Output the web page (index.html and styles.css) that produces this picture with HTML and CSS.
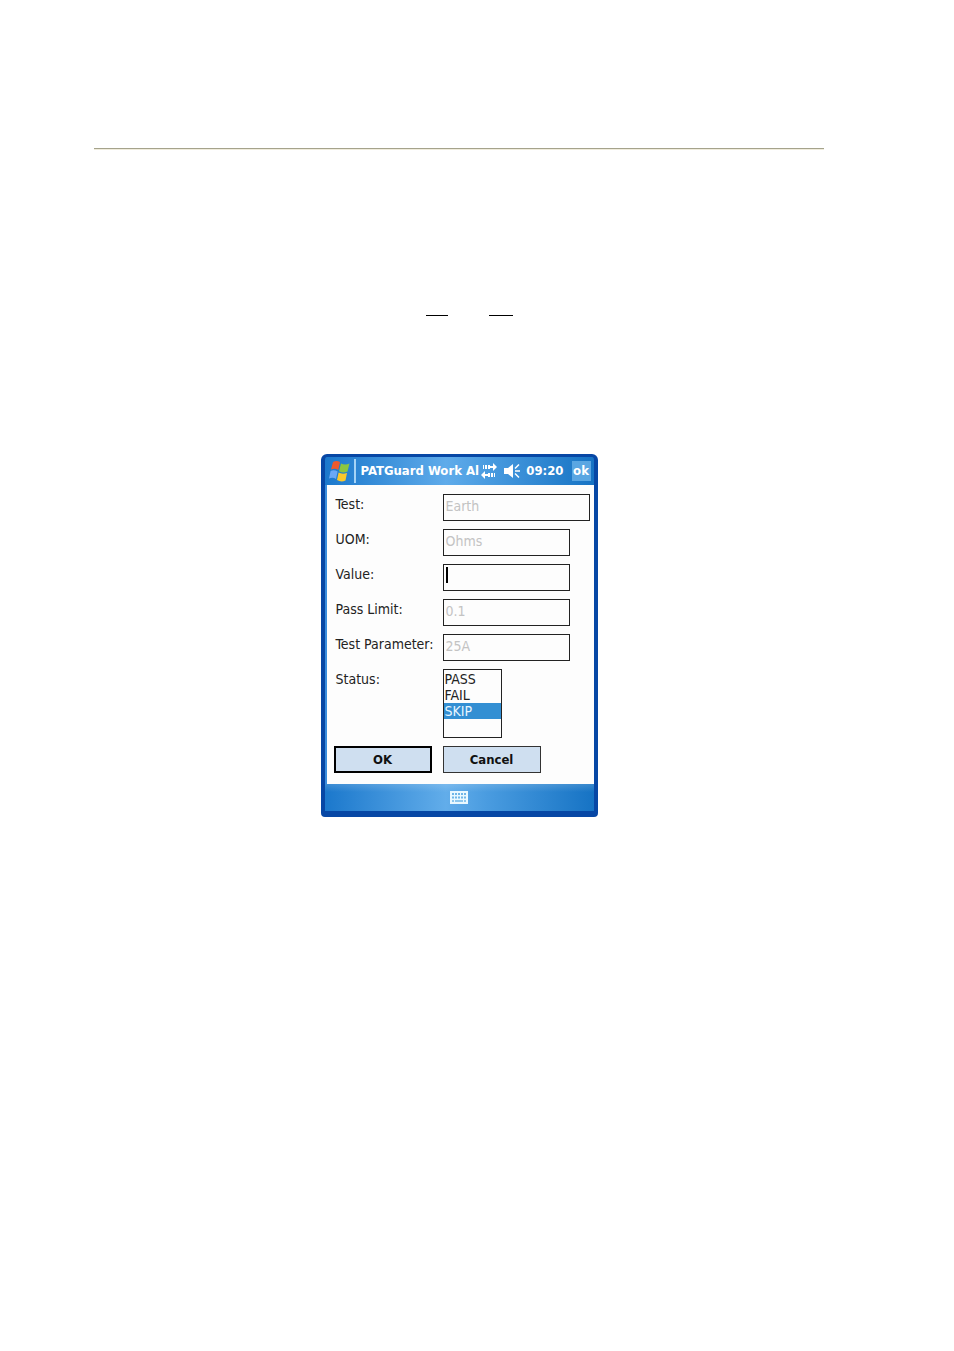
FILE: index.html
```html
<!DOCTYPE html>
<html lang="en">
<head>
<meta charset="utf-8">
<title>PATGuard</title>
<link rel="stylesheet" href="styles.css">
</head>
<body>
<main class="page">
  <hr class="rule">
  <div class="blanks"><span class="blank"></span><span class="blank blank-wide"></span></div>
  <form class="device">
    <header class="titlebar">
      <svg class="logo" viewBox="0 0 22 22" width="22" height="22" aria-hidden="true">
        <path d="M5 2Q8.500 0 12 2L10.300 10Q7 8 3 9.500Z" fill="#ee5a2c"/>
        <path d="M13 3.500Q17 5.500 21.500 3.500L19.500 11.500Q15 13.500 11 11.200Z" fill="#8cc63e"/>
        <path d="M2.600 11Q6 9.500 9.600 11.500L8 19Q5 17 1 18.500Z" fill="#6ba8f5"/>
        <path d="M10.600 12.500Q14 14.500 19 13L17.500 20.500Q13 22.500 9 20Z" fill="#fbc82c"/>
      </svg>
      <span class="divider"></span>
      <h1 class="title">PATGuard Work Al</h1>
      <svg class="sync" viewBox="0 0 18 16" width="18" height="16" fill="#fff" aria-hidden="true">
        <path d="M3 2h1v4H3zM5 2h2v4H5zM8 2h2v4H8zM10 3h3V0l4 4-4 4V5h-3zM15 10h-1v4h1zM13 10h-2v4h2zM10 10H8v4h2zM8 11H5V8l-4 4 4 4v-3h3z"/>
      </svg>
      <svg class="sound" viewBox="0 0 18 16" width="18" height="16" aria-hidden="true">
        <path d="M1 5h4l5-4v14l-5-4H1z" fill="#fff"/>
        <path d="M12 5.500l4-4M12 8h5M12 10.500l4 4" stroke="#fff" stroke-width="1.500" fill="none"/>
      </svg>
      <time class="clock">09:20</time>
      <button class="ok" type="button">ok</button>
    </header>
    <div class="form">
      <div class="row"><label for="test">Test:</label><input class="field wide" id="test" value="Earth" disabled></div>
      <div class="row"><label for="uom">UOM:</label><input class="field" id="uom" value="Ohms" disabled></div>
      <div class="row"><label for="value">Value:</label><div class="entry"><input class="field" id="value"><span class="caret"></span></div></div>
      <div class="row"><label for="limit">Pass Limit:</label><input class="field" id="limit" value="0.1" disabled></div>
      <div class="row"><label for="param">Test Parameter:</label><input class="field" id="param" value="25A" disabled></div>
      <div class="row"><label for="status">Status:</label>
        <select class="list" id="status" size="4">
          <option>PASS</option><option>FAIL</option><option class="chosen" selected>SKIP</option>
        </select>
      </div>
      <div class="actions"><button class="button primary" type="button">OK</button><button class="button" type="button">Cancel</button></div>
    </div>
    <footer class="bottombar">
      <svg viewBox="0 0 18 13" width="18" height="13" aria-label="Keyboard">
        <path d="M0 0h18v13H0z" fill="#e9f8ff"/>
        <path d="M2 3h14M2 6.500h14" stroke="#6fb6e8" stroke-width="2" stroke-dasharray="2 1"/>
        <path d="M2 10h2m1 0h8m1 0h2" stroke="#6fb6e8" stroke-width="1.500"/>
      </svg>
    </footer>
  </form>
</main>
</body>
</html>
```
FILE: styles.css
```css
* { box-sizing: border-box; }
body {
  margin: 0;
  background: #fff;
  color: #222;
  font: 14px/16px "DejaVu Sans Condensed", "DejaVu Sans", sans-serif;
}
.page { padding: 148px 130px 0 94px; }
.rule {
  height: 2px;
  margin: 0;
  border: 0;
  border-top: 1px solid #a5a38c;
  background: #f0ecdc;
}
.blanks {
  display: flex;
  justify-content: center;
  gap: 41px;
  padding: 165px 0 138px 21px;
}
.blank { width: 22px; height: 1px; background: #000; }
.blank-wide { width: 24px; }
.device {
  width: 277px;
  margin: 0 auto;
  overflow: hidden;
  border: solid #0747a5;
  border-width: 3px 4px 6px;
  border-radius: 6px 6px 4px 4px;
  background: #0747a5;
}
.titlebar {
  display: flex;
  align-items: center;
  height: 28px;
  padding: 0 3px;
  background: linear-gradient(90deg, #1b78cc, #5fabea 45%, #4a9ce0 60%, #1673c4);
  color: #fff;
  font-size: 13px;
  font-weight: bold;
}
.logo { flex: none; }
.divider { flex: none; width: 2px; height: 24px; margin: 0 5px 0 4px; background: #a5d3f6; }
.title {
  flex: 1;
  min-width: 0;
  margin: 0;
  font-size: 13px;
  white-space: nowrap;
}
.sync, .sound { flex: none; margin-right: 5px; }
.ok {
  width: 19px;
  height: 20px;
  margin-left: 8px;
  padding: 0;
  border: 0;
  background: #5aa6e2;
  color: #fff;
  font: inherit;
}
.form {
  display: grid;
  gap: 8px;
  padding: 9px 4px 11px 7px;
  border-left: 2px solid #3a8ddd;
  background: #fdfdfd;
}
.row {
  display: grid;
  grid-template-columns: 107px 1fr;
  align-items: start;
  padding-left: 2px;
}
.row label { padding-top: 2px; white-space: nowrap; }
.field {
  display: block;
  width: 127px;
  height: 27px;
  padding: 0 2px 4px;
  border: 1px solid #222;
  border-radius: 0;
  outline: 0;
  background: #fdfdfd;
  color: #222;
  font: inherit;
}
.field:disabled { color: #c3c3c3; }
.wide { width: 147px; }
.entry { position: relative; }
.caret {
  position: absolute;
  left: 3px;
  top: 3px;
  width: 2px;
  height: 16px;
  background: #000;
}
.list {
  width: 59px;
  height: 69px;
  padding: 1px 0;
  overflow: hidden;
  border: 1px solid #222;
  border-radius: 0;
  outline: 0;
  background: #fdfdfd;
  color: #222;
  font: inherit;
}
.list option { min-height: 16px; padding: 0 1px; line-height: 16px; }
.list .chosen { background: #338fd3 linear-gradient(#338fd3, #338fd3); color: #e8f6ff; }
.actions { display: flex; gap: 11px; }
.button {
  width: 98px;
  height: 27px;
  padding: 0;
  border: 1px solid #333;
  border-radius: 0;
  background: #cfdff0;
  color: #111;
  font: inherit;
  font-size: 13px;
  font-weight: bold;
}
.primary { border: 2px solid #000; }
.bottombar {
  display: flex;
  align-items: center;
  justify-content: center;
  height: 27px;
  background:
    linear-gradient(rgba(255, 255, 255, .15), transparent 30%),
    linear-gradient(90deg, #1b78cc, #62adea 45%, #4a9ce0 60%, #1673c4);
}
```
